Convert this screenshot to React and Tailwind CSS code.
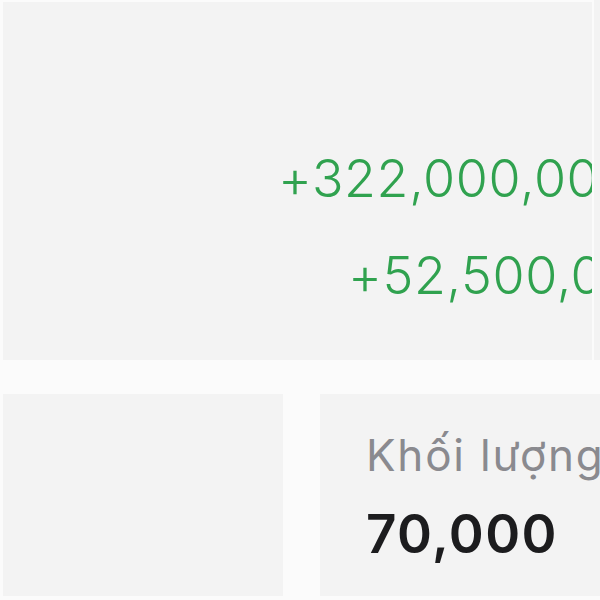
import React from "react";

const amounts = [
  { value: "+322,000,000", pad: "pl-[275px]" },
  { value: "+52,500,000", pad: "pl-[345px]" },
];

export default function App() {
  return (
    <div className="w-[600px] h-[600px] overflow-hidden bg-[#f3f3f3] flex flex-col font-['Inter',sans-serif]">
      {/* summary panel */}
      <div className="h-[360px] shrink-0 mr-[6px] bg-[#f3f3f3] border-l-[3px] border-t-2 border-r-2 border-[#fbfbfb] overflow-hidden pt-[151px] flex flex-col gap-[45px]">
        {amounts.map((a) => (
          <div
            key={a.value}
            className={`${a.pad} whitespace-nowrap text-[52px] leading-none text-[#30a24f] font-light tracking-[0.6px]`}
          >
            {a.value}
          </div>
        ))}
      </div>

      <div className="h-[34px] shrink-0 bg-[#fbfbfb]" />

      {/* stats cards */}
      <div className="flex flex-1 min-h-0 bg-[#fbfbfb] pb-[4px]">
        <div className="w-[283px] shrink-0 bg-[#f3f3f3] border-l-[3px] border-[#fbfbfb]" />
        <div className="w-[37px] shrink-0" />
        <div className="flex-1 bg-[#f3f3f3] overflow-hidden pl-[46px] pt-[39px] flex flex-col gap-[31px]">
          <div className="whitespace-nowrap text-[44px] leading-none text-[#8a8a8f] tracking-[1.8px]">
            Khối lượng
          </div>
          <div className="whitespace-nowrap text-[53px] leading-none font-semibold text-[#1c1c1e] tracking-[1.4px]">
            70,000
          </div>
        </div>
      </div>
    </div>
  );
}
